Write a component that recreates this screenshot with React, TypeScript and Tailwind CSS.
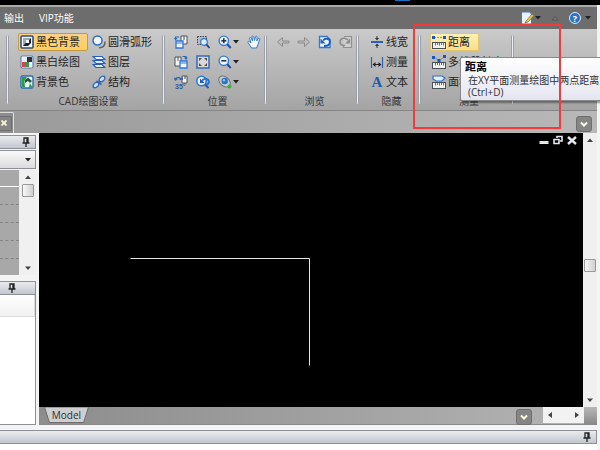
import type { ReactNode } from "react";
import clsx from "clsx";

const Icon = ({ children }: { children: ReactNode }) => (
  <svg viewBox="0 0 14 14" className="h-[14px] w-[14px] shrink-0" fill="none" aria-hidden="true">
    {children}
  </svg>
);

const Caret = () => (
  <svg viewBox="0 0 6 4" className="h-[4px] w-[6px] shrink-0" aria-hidden="true">
    <path d="M0 0h6L3 3.6z" fill="#222" />
  </svg>
);

const BlackBgIcon = () => (
  <Icon>
    <rect x="1" y="1" width="12" height="12" rx="1" fill="#f4f7fc" stroke="#2b4f8c" strokeWidth="1.6" />
    <path d="M3 11V3h8L9 5H6v3z" fill="#a3a8b3" />
    <path d="M3 11l2.500-3H9V5l2-2v5l-3 3z" fill="#16233f" />
    <path d="M6 5h3v3H6z" fill="#fff" />
  </Icon>
);

const BlackWhiteIcon = () => (
  <Icon>
    <rect x="1" y="1" width="12" height="12" rx="1.500" fill="#fff" stroke="#5f7fb8" strokeWidth="1.200" />
    <path d="M2 2h5v5H2z" fill="#eceff5" />
    <path d="M7 2h5v5H7z" fill="#2e3238" />
    <path d="M2 7h5v5H2z" fill="#d8434c" />
    <path d="M7 7h5v5H7z" fill="#f4f8f5" />
    <path d="M6 7h3v5H6z" fill="#2f9a58" />
  </Icon>
);

const BgColorIcon = () => (
  <Icon>
    <rect x="1" y="1" width="12" height="12" rx="1.500" fill="#f1f8f5" stroke="#2c6ab4" strokeWidth="1.400" />
    <path d="M2 2h5L4.500 6 5 12H2z" fill="#22a04a" />
    <path d="M5 5l3-2.500L12 6l-2 2-2-2-3 2z" fill="#1d5a36" />
    <path d="M6 8l4 4H5z" fill="#f6fbff" />
    <path d="M10 8l3 5H8.500z" fill="#27a850" />
  </Icon>
);

const SmoothArcIcon = () => (
  <Icon>
    <circle cx="5.500" cy="5.500" r="4.500" fill="#f2f7fe" stroke="#2f6cc8" strokeWidth="1.500" />
    <path d="M13 6.500c0 4-2.500 6.300-6 6.300" stroke="#5d636b" strokeWidth="1.500" />
  </Icon>
);

const LayersIcon = () => (
  <Icon>
    <path d="M1 9.500h9l3 3H4z" fill="#dceafc" stroke="#245fbd" strokeWidth="1.200" />
    <path d="M1 5.500h9l3 3H4z" fill="#dceafc" stroke="#245fbd" strokeWidth="1.200" />
    <path d="M1 1.500h9l3 3H4z" fill="#f3f8ff" stroke="#245fbd" strokeWidth="1.200" />
  </Icon>
);

const StructureIcon = () => (
  <Icon>
    <path d="M1 13L13 1" stroke="#2f66b8" strokeWidth="1.200" />
    <ellipse cx="4" cy="10" rx="3.200" ry="2.200" transform="rotate(-45 4 10)" fill="#cfe0f7" stroke="#2f66b8" strokeWidth="1.300" />
    <ellipse cx="10" cy="4" rx="3.200" ry="2.200" transform="rotate(-45 10 4)" fill="#cfe0f7" stroke="#2f66b8" strokeWidth="1.300" />
    <path d="M4.500 6l5 3.500" stroke="#2f66b8" strokeWidth="1.600" />
  </Icon>
);

const MoveBackIcon = () => (
  <Icon>
    <path d="M7 1h6v8H7z" fill="#f3f3f3" stroke="#4f545b" />
    <path d="M10 1v4" stroke="#4f545b" />
    <path d="M2 6h7v7H2z" fill="#eff6ff" stroke="#2f78d8" strokeWidth="1.300" />
    <path d="M2 8h7" stroke="#2f78d8" />
    <path d="M1.500 4V2H5" stroke="#2f66b8" strokeWidth="1.200" />
    <path d="M0 3h3.500L1.500 5.500z" fill="#2f66b8" />
  </Icon>
);

const MoveFrontIcon = () => (
  <Icon>
    <path d="M1 2h6v9H1z" fill="#f3f3f3" stroke="#4f545b" />
    <path d="M4 2v4" stroke="#4f545b" />
    <path d="M6 6h7v7H6z" fill="#eff6ff" stroke="#2f78d8" strokeWidth="1.300" />
    <path d="M6 8h7" stroke="#2f78d8" />
    <path d="M8.500 1.500H12v2" stroke="#2f66b8" strokeWidth="1.200" />
    <path d="M10 2.500h4L12 5z" fill="#2f66b8" />
  </Icon>
);

const RotateIcon = () => (
  <Icon>
    <path d="M8 1h5v7H8z" fill="#f3f3f3" stroke="#4f545b" />
    <path d="M11 1v3" stroke="#4f545b" />
    <path d="M1 5c1-3 4-3 6-1" stroke="#2f66b8" strokeWidth="1.500" />
    <path d="M0 2.500L1 6l3-2zM5 5h4V2z" fill="#2f66b8" />
    <text x="1" y="13.500" fontSize="7" fontWeight="700" fill="#2d59a4" fontFamily="Liberation Sans, sans-serif">35°</text>
  </Icon>
);

const ZoomWindowIcon = () => (
  <Icon>
    <path d="M1.500 1.500h9v8h-9z" fill="#b9bbbf" stroke="#3f444b" strokeDasharray="1.500 1" />
    <circle cx="8" cy="7" r="3.300" fill="#dcebfd" stroke="#2f78cf" strokeWidth="1.200" />
    <path d="M10.500 9.500l3 3.500" stroke="#20427c" strokeWidth="1.800" />
  </Icon>
);

const FitIcon = () => (
  <Icon>
    <rect x="1" y="1" width="12" height="12" fill="#d9dad6" stroke="#3f70bd" strokeWidth="1.600" />
    <path d="M3 3h3L3 6zM11 3v3L8 3zM3 11V8l3 3zM11 11H8l3-3z" fill="#4a4e4e" />
  </Icon>
);

const ZoomPrevIcon = () => (
  <Icon>
    <circle cx="5.500" cy="6" r="4.700" fill="#e9f3fe" stroke="#2f78d8" strokeWidth="1.600" />
    <path d="M4 3.500V8h4.500z" fill="#1d5ac0" />
    <path d="M6 6.500c1-3.500 6-3.500 7 0 0 2-1 3-3 3" stroke="#1f73d8" strokeWidth="1.700" />
    <path d="M9 9.500l3.500 3.500" stroke="#2b5aa5" strokeWidth="2" />
  </Icon>
);

const Magnifier = ({ plus }: { plus?: boolean }) => (
  <Icon>
    <circle cx="5.800" cy="5.800" r="4.700" fill="#eaf3fe" stroke="#2f7ad6" strokeWidth="1.400" />
    <path d="M3.300 5.800h5" stroke="#182a48" strokeWidth="1.500" />
    {plus && <path d="M5.800 3.300v5" stroke="#182a48" strokeWidth="1.500" />}
    <path d="M9.300 9.300l3.400 3.700" stroke="#1f4f9c" strokeWidth="2" />
  </Icon>
);

const OrbitIcon = () => (
  <Icon>
    <ellipse cx="6.500" cy="6.500" rx="6.500" ry="4.600" transform="rotate(42 6.500 6.500)" fill="#c3cdc8" stroke="#6f7679" />
    <circle cx="6.700" cy="6" r="3.200" fill="#2c6fc9" />
    <circle cx="6" cy="5.200" r="1.200" fill="#8fc3f5" />
    <circle cx="11.500" cy="11.500" r="2" fill="#34b434" />
  </Icon>
);

const HandIcon = () => (
  <Icon>
    <path
      d="M4.500 13L1 7.500c-.5-1 .7-1.600 1.500-.8L4 8 2.500 3.500c-.2-1 1.200-1.400 1.600-.5L5.500 6 5 1.800c0-1.100 1.500-1.200 1.700-.2L7.500 5.500 8.500 1.800c.3-1 1.700-.7 1.600.4L9.800 6l1.500-2.500c.6-.8 1.800-.2 1.400.8L11 9.500 9.500 13z"
      fill="#f4f9ff"
      stroke="#2f78cf"
    />
  </Icon>
);

const ArrowIcon = ({ right }: { right?: boolean }) => (
  <Icon>
    <path
      d={right ? "M1 6h6.500V2.500L12.500 7 7.500 11.500V8H1z" : "M13 6H6.500V2.500L1.500 7 6.500 11.500V8H13z"}
      fill="#bebebe"
      stroke="#8d8d8d"
    />
  </Icon>
);

const UndoViewIcon = () => (
  <Icon>
    <path d="M1.500 1.500H9l3 3v8H1.500z" fill="#e8f2ff" stroke="#2f78d8" strokeWidth="1.300" />
    <path d="M6 11c4 0 6-1.500 6-4.500C11.500 3 7 3 5 5.500" stroke="#1b5fc6" strokeWidth="1.900" />
    <path d="M2.500 3.500v5h5z" fill="#1b5fc6" />
  </Icon>
);

const RedoViewIcon = () => (
  <Icon>
    <path d="M5 1.500h7.500v11h-8V10" fill="#cfcfcf" stroke="#909090" strokeWidth="1.200" />
    <path d="M9 5C6 2 1 3 1 7c0 2 2 3.500 5 3.500" stroke="#8c8c8c" strokeWidth="1.500" />
    <path d="M11 3.500v5H6z" fill="#8c8c8c" />
  </Icon>
);

const LineWidthIcon = () => (
  <Icon>
    <path d="M1 7h12" stroke="#2a62b5" strokeWidth="2" />
    <path d="M7 1v3M7 10v3" stroke="#333" />
    <path d="M5 3h4L7 5.500zM5 11h4L7 8.500z" fill="#333" />
  </Icon>
);

const MeasureIcon = () => (
  <Icon>
    <path d="M1.500 2v11M12.500 2v11" stroke="#2a62b5" strokeWidth="1.200" />
    <path d="M4 9.500h6" stroke="#222" />
    <path d="M2.500 9.500L5.500 7v5zM11.500 9.500L8.500 7v5z" fill="#222" />
  </Icon>
);

const TextIcon = () => (
  <span aria-hidden="true" className="w-[14px] shrink-0 text-center font-['Liberation_Serif',serif] text-[15px] leading-[14px] font-bold text-[#1f5cab]">
    A
  </span>
);

const Ruler = () => (
  <>
    <rect x="0.500" y="7.500" width="13" height="6" fill="#f1f1ec" stroke="#4b4f57" />
    <path d="M3.500 8v2.500M5.500 8v2M7.500 8v2.500M9.500 8v2M11.500 8v2.500" stroke="#4b4f57" strokeWidth="0.800" />
  </>
);

const DistanceIcon = () => (
  <Icon>
    <path d="M2 2.500h10" stroke="#7696c4" strokeDasharray="2 1" />
    <path d="M0 1h3v3H0zM11 1h3v3h-3z" fill="#1f56b4" />
    <Ruler />
  </Icon>
);

const PolylineIcon = () => (
  <Icon>
    <path d="M2 2l5 4 5-4" stroke="#7696c4" />
    <path d="M0 1h3v3H0zM11 0h3v3h-3zM5.500 4h3v3h-3z" fill="#1f56b4" />
    <Ruler />
  </Icon>
);

const AreaIcon = () => (
  <Icon>
    <path d="M1 1h9l3 2-3 3H4L1 4z" fill="#e3f0ff" stroke="#2f6fc9" strokeWidth="1.200" />
    <Ruler />
  </Icon>
);

type Tool = { label: string; icon: ReactNode; active?: boolean; menu?: boolean };

const settings: Tool[][] = [
  [
    { label: "黑色背景", icon: <BlackBgIcon />, active: true },
    { label: "黑白绘图", icon: <BlackWhiteIcon /> },
    { label: "背景色", icon: <BgColorIcon /> },
  ],
  [
    { label: "圆滑弧形", icon: <SmoothArcIcon /> },
    { label: "图层", icon: <LayersIcon /> },
    { label: "结构", icon: <StructureIcon /> },
  ],
];

const positions: Tool[][] = [
  [
    { label: "后移", icon: <MoveBackIcon /> },
    { label: "前移", icon: <MoveFrontIcon /> },
    { label: "旋转", icon: <RotateIcon /> },
  ],
  [
    { label: "窗口缩放", icon: <ZoomWindowIcon /> },
    { label: "适应窗口", icon: <FitIcon /> },
    { label: "上一视图", icon: <ZoomPrevIcon /> },
  ],
  [
    { label: "放大", icon: <Magnifier plus />, menu: true },
    { label: "缩小", icon: <Magnifier />, menu: true },
    { label: "三维视图", icon: <OrbitIcon />, menu: true },
  ],
  [{ label: "平移", icon: <HandIcon /> }],
];

const browse: Tool[][] = [
  [{ label: "后退", icon: <ArrowIcon /> }],
  [{ label: "前进", icon: <ArrowIcon right /> }],
  [{ label: "撤销", icon: <UndoViewIcon /> }],
  [{ label: "重做", icon: <RedoViewIcon /> }],
];

const hide: Tool[] = [
  { label: "线宽", icon: <LineWidthIcon /> },
  { label: "测量", icon: <MeasureIcon /> },
  { label: "文本", icon: <TextIcon /> },
];

const ToolButton = ({ tool }: { tool: Tool }) => (
  <button
    type="button"
    className={clsx(
      "flex h-[18px] items-center gap-[2px] rounded-[2px] border px-[1px] whitespace-nowrap",
      tool.active
        ? "w-[70px] border-[#c39a4a] bg-linear-to-b from-[#fbd08a] to-[#ffcf58]"
        : "border-transparent"
    )}
  >
    {tool.icon}
    <span>{tool.label}</span>
  </button>
);

const IconButton = ({ tool }: { tool: Tool }) => (
  <button type="button" aria-label={tool.label} className="flex h-[18px] items-center gap-[1px]">
    {tool.icon}
    {tool.menu && <Caret />}
  </button>
);

const Separator = () => (
  <div className="my-[6px] w-[3px] shrink-0 rounded-full border-x border-[#9c9fa8] bg-[#eceef6]" />
);

const Group = ({ title, className, children }: { title: string; className: string; children: ReactNode }) => (
  <section className={clsx("flex shrink-0 flex-col justify-between pt-1 pb-[2px]", className)}>
    <div className="flex pl-[9px]">{children}</div>
    <h2 className="pl-[6px] text-center text-[10px] leading-[14px] text-[#363636]">{title}</h2>
  </section>
);

const Column = ({ children }: { children: ReactNode }) => (
  <div className="flex flex-col gap-[2px]">{children}</div>
);

const Pin = () => (
  <svg viewBox="0 0 8 10" className="h-[10px] w-[8px]" fill="none" aria-hidden="true">
    <path d="M2 1h4v5H2zM0.500 6h7M4 6v4M5 1v5" stroke="#222" strokeWidth="1.300" />
  </svg>
);

const PanelHeader = ({ label, className }: { label: string; className?: string }) => (
  <div
    className={clsx(
      "flex h-[14px] shrink-0 items-center justify-end border border-l-0 border-[#8d9097] bg-linear-to-b from-[#e9ebef] to-[#c3c7ce]",
      className
    )}
  >
    <button type="button" aria-label={label}>
      <Pin />
    </button>
  </div>
);

const ScrollArrow = ({ d, label }: { d: string; label: string }) => (
  <button type="button" aria-label={label} className="flex h-[14px] w-[14px] items-center justify-center">
    <svg viewBox="0 0 6 6" className="h-[6px] w-[6px]" aria-hidden="true">
      <path d={d} fill="#444" />
    </svg>
  </button>
);

const UP = "M0 5h6L3 1.500z";
const DOWN = "M0 1.500h6L3 5z";

const ChevronBox = ({ label }: { label: string }) => (
  <button
    type="button"
    aria-label={label}
    className="flex h-4 w-4 shrink-0 items-center justify-center rounded-[3px] border border-[#6f6f6f] bg-[#858585]"
  >
    <svg viewBox="0 0 8 7" className="h-[7px] w-[8px]" fill="none" aria-hidden="true">
      <path d="M1 1.500l3 3 3-3" stroke="#fffde0" strokeWidth="2" />
    </svg>
  </button>
);

const MenuBar = () => (
  <header>
    <div className="flex h-[5px] bg-black">
      <div className="w-[395px]" />
      <div className="h-[1px] w-[15px] bg-[#1673c4]" />
    </div>
    <div className="pr-[3px]">
      <nav className="flex h-6 items-center border-t-2 border-[#aaa] bg-[#6d6d6d] pr-[6px] pl-1 text-[10px] text-white">
        <a href="#output">输出</a>
        <a href="#vip" className="ml-[15px]">VIP功能</a>
        <div className="ml-auto flex items-center">
          <button type="button" aria-label="样式" className="flex items-center gap-[1px]">
            <Icon>
              <path d="M1.500 1h8l2 2v10h-10z" fill="#e9f2ff" stroke="#3c78c8" />
              <path d="M6 10l6-7 2 1.500-6 6.500-3 1z" fill="#e9c348" stroke="#7b6b34" strokeWidth="0.700" />
            </Icon>
            <Caret />
          </button>
          <button type="button" aria-label="折叠功能区" className="px-[10px]">
            <svg viewBox="0 0 8 7" className="h-[7px] w-[8px]" fill="none" aria-hidden="true">
              <path d="M1 5l3-3.500L7 5z" fill="#7a7a7a" stroke="#555" />
            </svg>
          </button>
          <button type="button" aria-label="帮助" className="flex items-center gap-1">
            <span className="flex h-3 w-3 items-center justify-center rounded-full border border-[#d9e9fb] bg-[#2c74c4] text-[9px] leading-none font-bold">
              ?
            </span>
            <Caret />
          </button>
        </div>
      </nav>
    </div>
  </header>
);

const Ribbon = () => (
  <div className="flex h-[82px] border-b border-[#858585] bg-linear-to-b from-[#cacaca] to-[#a4a4a4] pl-[6px] text-[11px] leading-[14px] text-[#242424]">
    <Separator />
    <Group title="CAD绘图设置" className="w-[153px]">
      <div className="flex gap-[2px]">
        {settings.map((col, i) => (
          <Column key={i}>
            {col.map(tool => <ToolButton key={tool.label} tool={tool} />)}
          </Column>
        ))}
      </div>
    </Group>
    <Separator />
    <Group title="位置" className="w-[99px]">
      <div className="flex gap-[8px]">
        {positions.map((col, i) => (
          <Column key={i}>
            {col.map(tool => <IconButton key={tool.label} tool={tool} />)}
          </Column>
        ))}
      </div>
    </Group>
    <Separator />
    <Group title="浏览" className="w-[89px]">
      <div className="flex gap-[7px]">
        {browse.map((col, i) => (
          <Column key={i}>
            {col.map(tool => <IconButton key={tool.label} tool={tool} />)}
          </Column>
        ))}
      </div>
    </Group>
    <Separator />
    <Group title="隐藏" className="w-[59px]">
      <Column>
        {hide.map(tool => <ToolButton key={tool.label} tool={tool} />)}
      </Column>
    </Group>
    <Separator />
    <Group title="测量" className="w-[90px]">
      <div className="relative">
        <Column>
          <button
            type="button"
            aria-describedby="distance-tip"
            className="flex h-[18px] w-[49px] items-center gap-[2px] border border-[#e3c56e] bg-linear-to-b from-[#fdf0b4] to-[#fbdf85] px-[1px] whitespace-nowrap"
          >
            <DistanceIcon />
            <span>距离</span>
          </button>
          <ToolButton tool={{ label: "多线段长度", icon: <PolylineIcon /> }} />
          <ToolButton tool={{ label: "面积", icon: <AreaIcon /> }} />
        </Column>
        <div
          id="distance-tip"
          role="tooltip"
          className="absolute top-6 left-[30px] z-10 w-44 rounded-[2px] border border-[#8a8a8a] bg-linear-to-b from-white to-[#e4e5f0] px-1 py-[2px] text-black shadow-[2px_2px_2px_rgba(0,0,0,0.4)]"
        >
          <strong className="block leading-[14px]">距离</strong>
          <p className="pl-[3px] text-[10px] leading-3 whitespace-nowrap text-[#333]">
            在XY平面测量绘图中两点距离
            <br />
            (Ctrl+D)
          </p>
        </div>
      </div>
    </Group>
    <Separator />
  </div>
);

const SidePanel = () => (
  <aside className="flex w-[39px] shrink-0 flex-col border-r-[3px] border-[#f4f4f4] bg-[#f4f4f4]">
    <PanelHeader label="固定属性面板" className="mt-[2px] pr-[5px]" />
    <div className="relative mt-[1px] flex h-[19px] shrink-0 items-center border border-l-0 border-[#8d9097] bg-linear-to-b from-[#fafafa] to-[#dcdcdc]">
      <select aria-label="对象" className="h-full w-full appearance-none" />
      <div className="pointer-events-none absolute right-1">
        <Caret />
      </div>
    </div>
    <div className="mt-[1px] flex h-[105px] shrink-0">
      <div className="flex flex-1 flex-col border-r border-[#eee] bg-[#a8a8a8]">
        <div className="h-[17px] border-b border-white" />
        {[0, 1, 2, 3].map(row => (
          <div key={row} className="h-[18px] border-b border-dashed border-[#858585]" />
        ))}
      </div>
      <div className="flex w-[16px] flex-col items-center bg-[#f0f0f0]">
        <ScrollArrow d={UP} label="向上滚动" />
        <div className="h-[13px] w-[12px] rounded-[1px] border border-[#999] bg-linear-to-r from-[#f8f8f8] to-[#cfcfcf]" />
        <div className="flex-1" />
        <ScrollArrow d={DOWN} label="向下滚动" />
      </div>
    </div>
    <PanelHeader label="固定命令面板" className="mt-[6px] pr-[19px]" />
    <div className="flex flex-1 flex-col border-r border-b border-[#8d9097] bg-white">
      <div className="h-[22px] border-r border-b border-[#ddd] bg-linear-to-b from-white to-[#f1f1f1]" />
    </div>
  </aside>
);

const Canvas = () => (
  <main className="relative flex-1 overflow-hidden bg-black">
    <svg className="absolute inset-0 h-full w-full" fill="none" role="img" aria-label="绘图">
      <path d="M91.500 125.500h179v107" stroke="#e6e6e6" />
    </svg>
    <div className="absolute top-[2px] right-[6px] flex gap-[4px]">
      <button type="button" aria-label="最小化">
        <svg viewBox="0 0 10 10" className="h-[10px] w-[10px]">
          <path d="M0.500 6h9v3h-9z" fill="#e4e8ee" />
        </svg>
      </button>
      <button type="button" aria-label="还原">
        <svg viewBox="0 0 10 10" className="h-[10px] w-[10px]" fill="none">
          <path d="M4 3V1.500h5V6H7M1 4.500h5v4H1z" stroke="#e4e8ee" strokeWidth="1.600" />
        </svg>
      </button>
      <button type="button" aria-label="关闭">
        <svg viewBox="0 0 10 10" className="h-[10px] w-[10px]" fill="none">
          <path d="M1 2l8 7M9 2L1 9" stroke="#e4e8ee" strokeWidth="2.400" />
        </svg>
      </button>
    </div>
  </main>
);

const ModelBar = () => (
  <footer className="flex h-[18px] shrink-0 border-b border-[#8a8a8a] bg-linear-to-r from-[#8d8d8d] to-[#b4b4b4]">
    <button type="button" className="relative ml-[5px] h-4 w-[45px] text-[10px] leading-[14px] text-[#2e2e38]">
      <svg viewBox="0 0 46 16" preserveAspectRatio="none" className="absolute inset-0 h-full w-full" aria-hidden="true">
        <path d="M0.500 0h45l-5 15.500h-35z" fill="#cfcfcf" stroke="#6b6b6b" />
      </svg>
      <span className="relative">Model</span>
    </button>
    <div className="ml-auto flex">
      <div className="mt-[2px] mr-[11px]">
        <ChevronBox label="布局列表" />
      </div>
      <div className="flex h-[16px] w-[41px] items-center justify-between bg-[#f2f2f2]">
        <ScrollArrow d="M5 0v6L1 3z" label="向左滚动" />
        <ScrollArrow d="M1 0v6l4-3z" label="向右滚动" />
      </div>
      <div className="w-[13px] bg-linear-to-b from-[#b8b8b8] to-[#8a8a8a]" />
    </div>
  </footer>
);

export default function App() {
  return (
    <div className="relative flex h-screen flex-col overflow-hidden bg-[#f4f4f6] font-['Open_Sans','Noto_Sans_CJK_SC',sans-serif]">
      <MenuBar />
      <div className="flex min-h-0 flex-1 flex-col pr-[3px]">
        <Ribbon />
        <div className="flex h-[22px] shrink-0 items-end justify-between bg-linear-to-r from-[#9a9a9a] to-[#b8b8b8] pr-[5px]">
          <div className="flex h-[21px] items-center rounded-tr-[2px] border-t border-r border-[#ddd] bg-[#8d8d8d] pr-[1px]">
            <button
              type="button"
              aria-label="关闭标签"
              className="flex h-[15px] w-[12px] items-center justify-center rounded-r-[2px] border border-l-0 border-[#6d6d6d] bg-[#858585] pr-[3px]"
            >
              <svg viewBox="0 0 6 6" className="h-[6px] w-[6px]" fill="none">
                <path d="M0.500 0.500l5 5M5.500 0.500l-5 5" stroke="#fffdd8" strokeWidth="1.600" />
              </svg>
            </button>
          </div>
          <div className="pb-[1px]">
            <ChevronBox label="文档列表" />
          </div>
        </div>
        <div className="flex min-h-0 flex-1">
          <SidePanel />
          <div className="flex min-w-0 flex-1 flex-col">
            <div className="flex min-h-0 flex-1">
              <Canvas />
              <div className="flex w-[14px] flex-col items-center bg-[#f0f0f0]">
                <ScrollArrow d={UP} label="向上滚动" />
                <div className="flex flex-1 items-center pb-[10px]">
                  <div className="h-[13px] w-[12px] rounded-[1px] border border-[#999] bg-linear-to-r from-[#f8f8f8] to-[#cfcfcf]" />
                </div>
                <ScrollArrow d={DOWN} label="向下滚动" />
              </div>
            </div>
            <ModelBar />
          </div>
        </div>
        <PanelHeader label="固定输出面板" className="mt-[5px] pr-[5px]" />
        <div className="h-[6px] shrink-0 bg-white" />
      </div>
      <div className="pointer-events-none absolute top-6 left-[413px] z-20 h-[105px] w-[148px] border-2 border-[#f43b3b]" />
    </div>
  );
}
